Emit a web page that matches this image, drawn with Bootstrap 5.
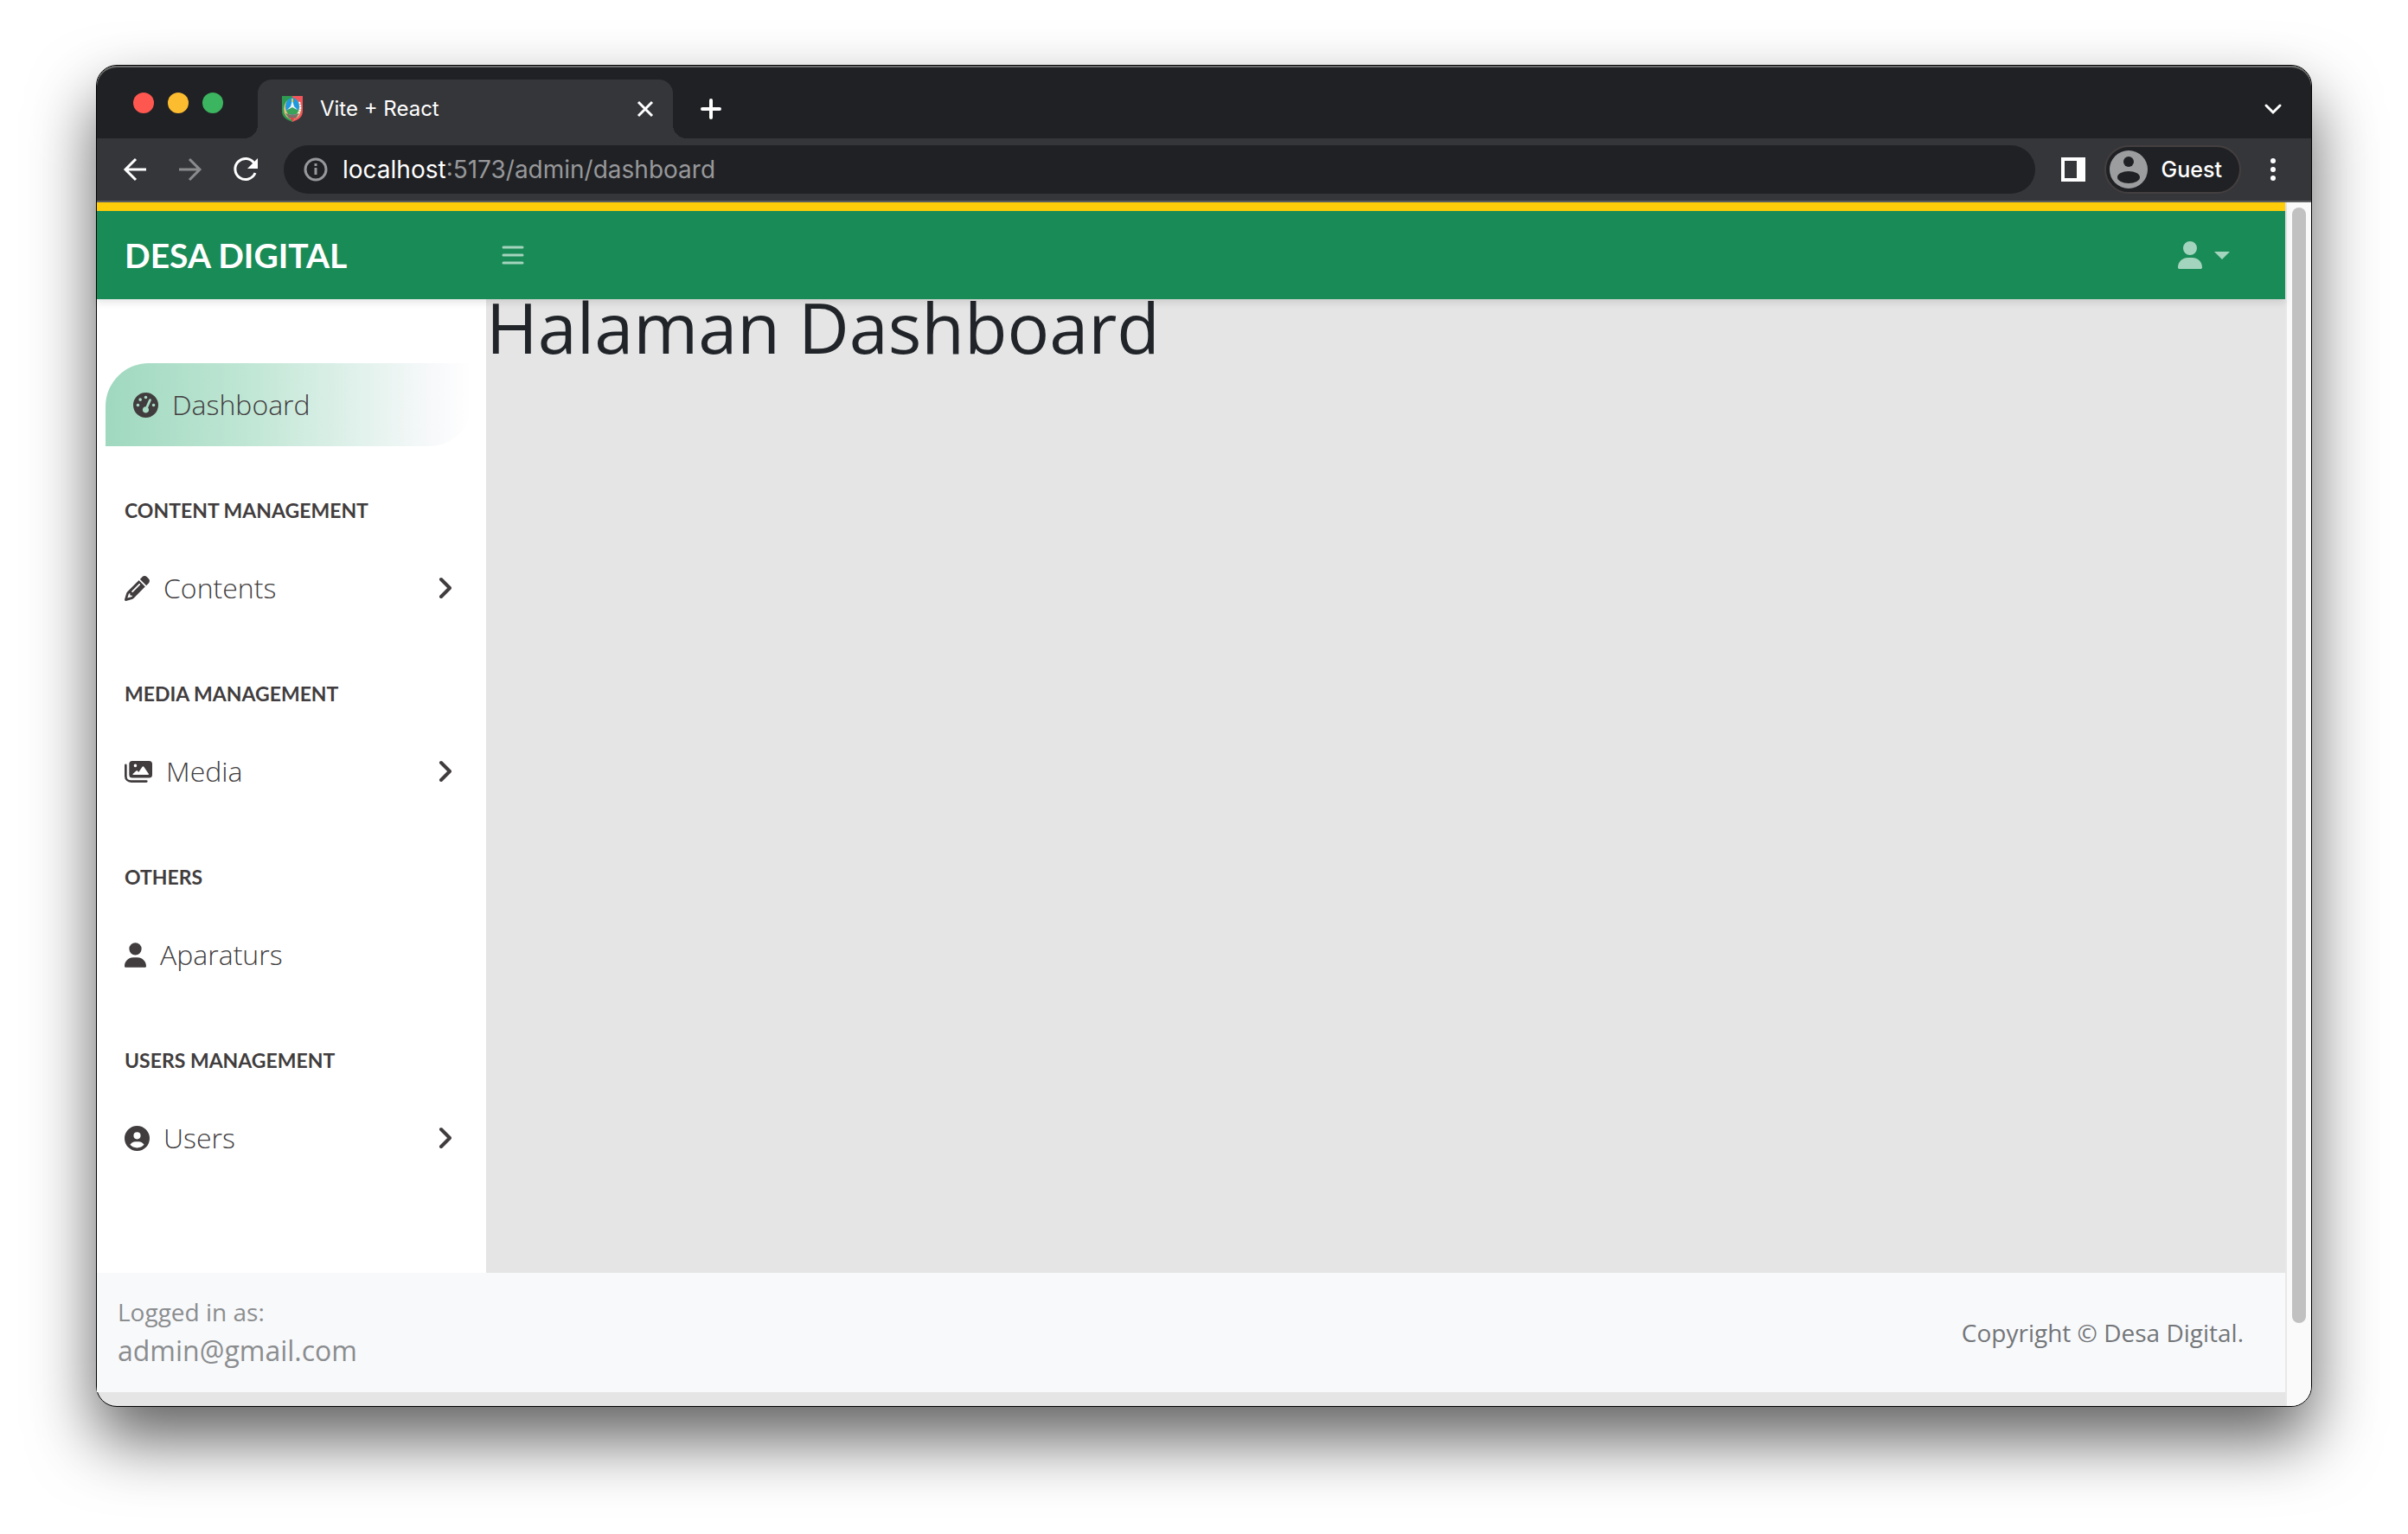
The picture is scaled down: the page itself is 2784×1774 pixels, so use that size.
<!DOCTYPE html>
<html lang="id">
<head>
<meta charset="utf-8">
<meta name="viewport" content="width=device-width, initial-scale=1">
<title>Vite + React</title>
<link href="https://cdn.jsdelivr.net/npm/bootstrap@5.3.0/dist/css/bootstrap.min.css" rel="stylesheet">
<style>
  :root { --strip: #202124; --bar: #35363a; --ink: #413d3e; }
  body { background: #fff; font-family: "Open Sans", "Noto Sans", sans-serif; font-size: 32px; line-height: 48px; }
  .desktop { padding: 75px 111px 147px; }
  .browser { border: 1px solid #000; border-radius: 24px; background: #e5e5e5; box-shadow: 0 38px 76px rgba(0,0,0,.62); }
  .chrome { font-family: Inter, Roboto, sans-serif; color: #fff; }
  .chrome button { color: inherit; background: none; border: 0; padding: 0; line-height: 0; }
  svg { display: block; flex: none; }

  .tab-strip { background: var(--strip); height: 84px; box-shadow: inset 0 2px #6b6c6b; border-radius: 23px 23px 0 0; padding: 0 32px 0 42px; }
  .lights { gap: 16px; margin-right: 40px; padding-bottom: 29px; }
  .lights i { width: 24px; height: 24px; border-radius: 50%; }
  .page-tab { background: var(--bar); width: 480px; height: 68px; border-radius: 16px 16px 0 0; padding: 0 22px 0 26px; gap: 18px; font-size: 24px; line-height: 36px; position: relative; }
  .page-tab::before, .page-tab::after { content: ""; position: absolute; bottom: 0; width: 16px; height: 16px; }
  .page-tab::before { left: -16px; background: radial-gradient(circle at 0 0, transparent 16px, var(--bar) 16px); }
  .page-tab::after { right: -16px; background: radial-gradient(circle at 100% 0, transparent 16px, var(--bar) 16px); }
  .chrome .new-tab { margin-left: 32px; }
  .tool-row { background: var(--bar); height: 74px; border-bottom: 2px solid #5d5e60; padding: 0 37px 0 28px; }
  .address { background: var(--strip); height: 56px; border-radius: 28px; margin: 0 30px 0 28px; padding: 0 22px; font-size: 28px; line-height: 40px; }
  .address input { background: none; border: 0; outline: 0; padding: 0; color: #97989b; min-width: 0; }
  .chrome .guest { height: 56px; border: 2px solid #443f40; border-radius: 28px; background: var(--strip); padding: 0 20px 0 4px; margin: 0 30px 0 22px; gap: 16px; font-size: 25px; font-weight: 500; line-height: 36px; }

  .topbar { background: #198b57; border-top: 10px solid #ffcd0a; height: 112px; padding: 0 64px 0 32px; box-shadow: 0 4px 8px rgba(0,0,0,.1); z-index: 2; }
  .brand-link { width: 436px; font-family: Lato, sans-serif; font-size: 39px; font-weight: 700; line-height: 60px; }
  .topbar button { color: #a3d4bd; background: none; border: 0; padding: 0; font-size: 30px; }
  .topbar .dropdown-toggle::after { margin-left: 14px; vertical-align: 0; }
  .sidebar { width: 450px; background: #fff; padding-top: 74px; color: var(--ink); }
  .sidebar a { height: 96px; color: inherit; padding: 0 40px 0 32px; gap: 16px; font-weight: 300; }
  .sidebar a.current { margin: 0 16px 0 10px; border-radius: 50px 0; background: linear-gradient(90deg, #9fd8bf, #bfe6d4 38%, #f8f9fb 90%, #fff); }
  .sidebar h2 { font-family: Lato, sans-serif; font-size: 23px; line-height: 36px; font-weight: 700; margin: 0; padding: 56px 32px 24px; }
  .content-area h1 { font-size: 81px; line-height: 96px; margin: -16px 0 0; color: #212529; font-weight: 400; }
  .page-foot { background: #f8f9fb; padding: 24px 48px 24px 24px; margin-bottom: 16px; color: #8b8d8f; }
  .page-foot .note { font-size: 28px; line-height: 42px; }
  .page-foot .rights { color: #737679; }
  .scroll-track { width: 30px; background: #fafafa; border-left: 2px solid #e8e8e8; padding: 6px 6px 96px; border-bottom-right-radius: 23px; }
  .scroll-thumb { background: #c1c1c1; border-radius: 8px; }
</style>
<script src="https://cdn.jsdelivr.net/npm/bootstrap@5.3.0/dist/js/bootstrap.bundle.min.js"></script>
</head>
<body>
<svg width="0" height="0" class="position-absolute" aria-hidden="true">
  <symbol id="i-user" viewBox="0 0 448 512"><path fill="currentColor" d="M224 256A128 128 0 1 0 224 0a128 128 0 1 0 0 256zm-45.700 48C79.800 304 0 383.800 0 482.300C0 498.700 13.300 512 29.700 512H418.300c16.400 0 29.700-13.300 29.700-29.700C448 383.800 368.200 304 269.700 304H178.300z"/></symbol>
  <symbol id="i-next" viewBox="0 0 18 28"><path fill="none" stroke="currentColor" stroke-width="4" stroke-linecap="round" stroke-linejoin="round" d="M6 4l10 10L6 24"/></symbol>
</svg>
<div class="desktop min-vh-100 d-flex">
<div class="browser flex-grow-1 d-flex flex-column">

  <header class="chrome">
    <div class="tab-strip d-flex align-items-end">
      <div class="lights d-flex"><i style="background:#fe5750"></i><i style="background:#fcbc2f"></i><i style="background:#3bb55f"></i></div>
      <div class="page-tab d-flex align-items-center">
        <svg width="28" height="32" viewBox="0 0 28 32">
          <path fill="#2f9a50" d="M2 1h12v30C6 28 2 25 2 18z"/><path fill="#f3565a" d="M14 1h12v17c0 7-4 10-12 13z"/>
          <ellipse cx="14" cy="16" rx="10" ry="12" fill="#d8c27c"/><path d="M22 8q4 9-4 17" fill="none" stroke="#fff" stroke-width="2" stroke-dasharray="2 1"/><ellipse cx="14" cy="13" rx="8" ry="10" fill="#1e9ae0"/>
          <path fill="#f2f4f4" d="M14 6l2 7 4 4-6-2-6 2 4-4z"/><path fill="#f5c730" d="M13 4h2v4h-2z"/><path fill="#3aa35a" d="M7 18l7-4 7 4-2 4H9z"/><path fill="#7d7068" d="M6 21q8 3 16 0l-4 6h-8z"/><path fill="#d9444b" d="M11 26h6l-3 4z"/>
        </svg>
        <span class="flex-grow-1">Vite + React</span>
        <button type="button" aria-label="Close tab"><svg width="20" height="20" viewBox="0 0 20 20" stroke="#fff" stroke-width="3"><path d="M2 2l16 16M18 2L2 18"/></svg></button>
      </div>
      <button type="button" class="new-tab d-flex align-items-center h-100 pt-3" aria-label="New tab"><svg width="24" height="24" viewBox="0 0 24 24" stroke="#fff" stroke-width="4" stroke-linecap="round"><path d="M12 2v20M2 12h20"/></svg></button>
      <button type="button" class="d-flex align-items-center h-100 pt-3 ms-auto" aria-label="Search tabs"><svg width="24" height="16" viewBox="0 0 24 16" fill="none" stroke="#fff" stroke-width="3" stroke-linecap="round"><path d="M4 4l8 8 8-8"/></svg></button>
    </div>

    <div class="tool-row d-flex align-items-center">
      <button type="button" aria-label="Back"><svg width="32" height="32" viewBox="0 0 32 32" fill="none" stroke="#fff" stroke-width="3"><path d="M29 16H5M17 4L5 16l12 12"/></svg></button>
      <button type="button" class="ms-4 ps-2" aria-label="Forward"><svg width="32" height="32" viewBox="0 0 32 32" fill="none" stroke="#8a8b8d" stroke-width="3"><path d="M3 16h24M15 4l12 12-12 12"/></svg></button>
      <button type="button" class="ms-4 ps-2" aria-label="Reload"><svg width="32" height="32" viewBox="0 0 32 32" fill="none" stroke="#fff" stroke-width="3"><path d="M26 9A12 12 0 1 0 27 20"/><path d="M30 3v12H18z" fill="#fff" stroke="none"/></svg></button>
      <div class="address d-flex align-items-center flex-grow-1">
        <svg width="30" height="30" viewBox="0 0 30 30" fill="none" stroke="#97989b" stroke-width="3"><circle cx="15" cy="15" r="12"/><path d="M15 13v8M15 8v3"/></svg>
        <label for="addr" class="ms-3">localhost</label><input id="addr" class="flex-grow-1" type="text" value=":5173/admin/dashboard">
      </div>
      <button type="button" aria-label="Side panel"><svg width="28" height="28" viewBox="0 0 28 28" fill="none" stroke="#fff"><path stroke-width="4" d="M2 2h24v24H2z"/><path fill="#fff" stroke="none" d="M18 2h8v24h-8z"/></svg></button>
      <button type="button" class="guest d-flex align-items-center"><svg width="44" height="44" viewBox="0 0 44 44"><circle cx="22" cy="22" r="22" fill="#9c9d9f"/><circle cx="22" cy="13" r="6" fill="#202124"/><ellipse cx="22" cy="31" rx="13" ry="7" fill="#202124"/></svg>Guest</button>
      <button type="button" aria-label="Menu"><svg width="14" height="28" viewBox="0 0 14 28" fill="#fff"><circle cx="7" cy="4" r="3"/><circle cx="7" cy="14" r="3"/><circle cx="7" cy="24" r="3"/></svg></button>
    </div>
  </header>

  <div class="d-flex flex-grow-1">
    <div class="flex-grow-1 d-flex flex-column">
      <nav class="topbar navbar flex-nowrap">
        <a class="brand-link navbar-brand text-white m-0 p-0" href="#">DESA DIGITAL</a>
        <button type="button" class="me-auto" aria-label="Toggle sidebar"><svg width="26" height="28" viewBox="0 0 26 28" stroke="currentColor" stroke-width="3" stroke-linecap="round"><path d="M2 5h22M2 14h22M2 23h22"/></svg></button>
        <button type="button" class="dropdown-toggle d-flex align-items-center" data-bs-toggle="dropdown" aria-label="Account"><svg width="28" height="32"><use href="#i-user"/></svg></button>
      </nav>

      <div class="d-flex flex-grow-1">
        <aside class="sidebar flex-shrink-0">
          <a class="current d-flex align-items-center text-decoration-none" href="#"><svg width="29" height="29" viewBox="0 0 512 512"><path fill="currentColor" fill-rule="evenodd" d="M0 256a256 256 0 1 1 512 0A256 256 0 1 1 0 256zM288 96a32 32 0 1 0 -64 0 32 32 0 1 0 64 0zM256 416c35.300 0 64-28.700 64-64c0-17.400-6.900-33.100-18.100-44.600L366 161.700c5.300-12.100-.2-26.300-12.300-31.600s-26.300 .2-31.600 12.300L257.900 288c-.6 0-1.300 0-1.900 0c-35.300 0-64 28.700-64 64s28.700 64 64 64zM176 144a32 32 0 1 0 -64 0 32 32 0 1 0 64 0zM96 288a32 32 0 1 0 0-64 32 32 0 1 0 0 64zm352-32a32 32 0 1 0 -64 0 32 32 0 1 0 64 0z"/></svg>Dashboard</a>
          <h2>CONTENT MANAGEMENT</h2>
          <a class="d-flex align-items-center text-decoration-none" href="#"><svg width="29" height="29" viewBox="0 0 512 512"><path fill="currentColor" d="M410.300 231l11.300-11.300-33.900-33.900-62.100-62.100L291.700 89.800l-11.300 11.300-22.600 22.600L58.600 322.900c-10.400 10.400-18 23.300-22.200 37.400L1 480.700c-2.500 8.400-.2 17.500 6.100 23.700s15.300 8.500 23.700 6.100l120.300-35.400c14.100-4.200 27-11.800 37.400-22.200L387.700 253.700 410.300 231zM160 399.400l-9.100 22.700c-4 3.100-8.500 5.400-13.300 6.900L59.400 452l23-78.100c1.400-4.900 3.800-9.400 6.900-13.300l22.700-9.100v32c0 8.800 7.200 16 16 16h32zM362.700 18.700L348.300 33.200 325.700 55.800 314.300 67.100l33.900 33.900 62.100 62.100 33.900 33.900 11.300-11.300 22.600-22.600 14.500-14.500c25-25 25-65.500 0-90.500L453.300 18.700c-25-25-65.500-25-90.500 0zm-47.400 168l-144 144c-6.200 6.200-16.400 6.200-22.600 0s-6.200-16.400 0-22.600l144-144c6.200-6.200 16.400-6.200 22.600 0s6.200 16.400 0 22.600z"/></svg>Contents<svg class="ms-auto" width="18" height="28"><use href="#i-next"/></svg></a>
          <h2>MEDIA MANAGEMENT</h2>
          <a class="d-flex align-items-center text-decoration-none" href="#"><svg width="32" height="29" viewBox="0 0 576 512"><path fill="none" stroke="currentColor" stroke-width="48" stroke-linecap="round" d="M24 120v224c0 66 46 112 112 112h320"/><path fill="currentColor" fill-rule="evenodd" d="M160 32h352q64 0 64 64v224q0 64-64 64H160q-64 0-64-64V96q0-64 64-64zM224 96a32 32 0 1 0 0 64 32 32 0 1 0 0-64zM180 320h312q18 0 10-18L402 152q-16-20-32 0l-78 112-22-26q-14-16-28 0l-70 62q-10 20 8 20z"/></svg>Media<svg class="ms-auto" width="18" height="28"><use href="#i-next"/></svg></a>
          <h2>OTHERS</h2>
          <a class="d-flex align-items-center text-decoration-none" href="#"><svg width="25" height="29"><use href="#i-user"/></svg>Aparaturs</a>
          <h2>USERS MANAGEMENT</h2>
          <a class="d-flex align-items-center text-decoration-none" href="#"><svg width="29" height="29" viewBox="0 0 512 512"><path fill="currentColor" fill-rule="evenodd" d="M399 384.200C376.900 345.800 335.400 320 288 320H224c-47.400 0-88.900 25.800-111 64.200c35.200 39.200 86.200 63.800 143 63.800s107.800-24.700 143-63.800zM0 256a256 256 0 1 1 512 0A256 256 0 1 1 0 256zm256 16a72 72 0 1 0 0-144 72 72 0 1 0 0 144z"/></svg>Users<svg class="ms-auto" width="18" height="28"><use href="#i-next"/></svg></a>
        </aside>
        <main class="content-area flex-grow-1"><h1>Halaman Dashboard</h1></main>
      </div>

      <footer class="page-foot d-flex align-items-center justify-content-between">
        <div><div class="note">Logged in as:</div><div>admin@gmail.com</div></div>
        <div class="note rights">Copyright © Desa Digital.</div>
      </footer>
    </div>
    <div class="scroll-track d-flex"><div class="scroll-thumb flex-grow-1"></div></div>
  </div>
</div>
</div>
</body>
</html>
